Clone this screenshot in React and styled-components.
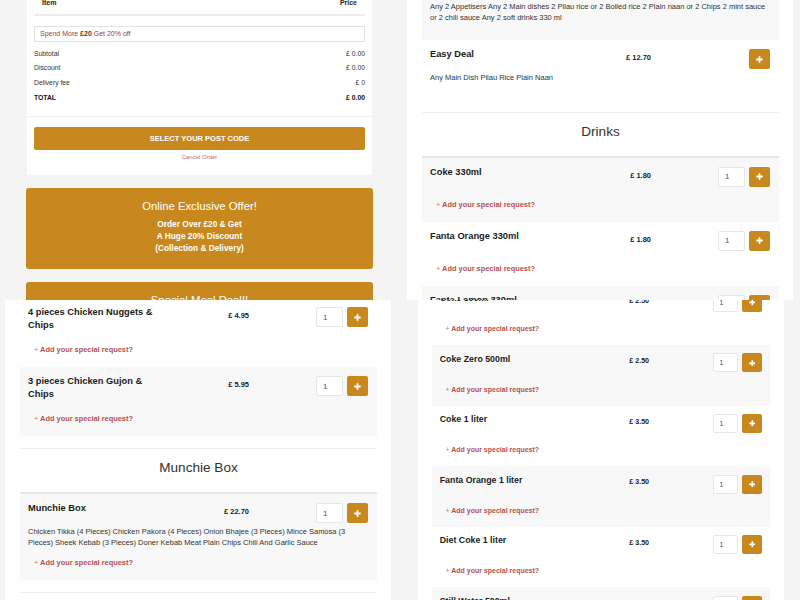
import styled, { createGlobalStyle } from "styled-components";

const GOLD = "#c9881d";

const GlobalStyle = createGlobalStyle`
  html, body {
    margin: 0;
    padding: 0;
    background: #f4f4f4;
  }
  body {
    font-family: "Liberation Sans", Arial, sans-serif;
    color: #333;
  }
  * {
    box-sizing: border-box;
  }
`;

const Screen = styled.div`
  width: 800px;
  height: 600px;
  display: grid;
  grid-template-columns: 400px 400px;
  grid-template-rows: 300px 300px;
  overflow: hidden;
`;

const Pane = styled.div`
  overflow: hidden;
  background: #f4f4f4;
`;

const Zoom = styled.div`
  zoom: ${(p) => p.$zoom || 1};
`;

/* ---------- cart column ---------- */

const CartCard = styled.div`
  width: 345px;
  margin: -12px 0 0 27px;
  padding-bottom: 12.6px;
  background: #fff;
`;

const CartHead = styled.div`
  margin: 0 7px;
  padding: 10px 8px 7px;
  display: flex;
  justify-content: space-between;
  border-bottom: 2px solid #ececec;
  font-size: 7px;
  font-weight: 700;
  line-height: 9px;
  color: #222;
`;

const Promo = styled.div`
  height: 16px;
  margin: 9.7px 7px 0;
  padding: 0 5px;
  border: 1px solid #e2e2e2;
  font-size: 7px;
  line-height: 14px;
  color: #8b4848;

  b {
    color: #6b2f2f;
  }
`;

const Totals = styled.div`
  padding: 5px 7px 11px;
`;

const TotalRow = styled.div`
  height: 14.67px;
  display: flex;
  justify-content: space-between;
  font-size: 6.8px;
  line-height: 14.67px;
  font-weight: ${(p) => (p.$strong ? 700 : 400)};
  color: ${(p) => (p.$strong ? "#111" : "#333")};
`;

const CartFoot = styled.div`
  padding: 10px 7px 0;
  border-top: 1px solid #f1f1f1;
  text-align: center;
`;

const PostcodeButton = styled.button`
  width: 100%;
  height: 23px;
  border: none;
  border-radius: 2px;
  background: ${GOLD};
  color: #fff;
  font-family: "Liberation Sans", Arial, sans-serif;
  font-size: 7.5px;
  font-weight: 700;
`;

const Cancel = styled.div`
  margin-top: 2px;
  font-size: 6px;
  line-height: 10px;
  color: #c46a6a;
`;

const OfferBox = styled.div`
  width: 347px;
  margin: 13px 0 0 26px;
  padding: 11px 10px 15px;
  border-radius: 3px;
  background: ${GOLD};
  color: #fff;
  text-align: center;
`;

const OfferTitle = styled.div`
  font-size: 11.3px;
  line-height: 14px;
`;

const OfferText = styled.div`
  margin-top: 5px;
  font-size: 8.3px;
  font-weight: 700;
  line-height: 12px;
`;

/* ---------- menu column ---------- */

const MenuCard = styled.div`
  width: 386px;
  margin: ${(p) => p.$top}px 0 0 ${(p) => p.$left}px;
  padding: 0 14px 0 15px;
  background: #fff;
`;

const Section = styled.section`
  padding-bottom: 12px;
  border-top: ${(p) => (p.$first ? "none" : "1px solid #efefef")};
`;

const SectionTitle = styled.h2`
  margin: 0;
  padding: 10px 0 15px;
  border-bottom: 2px solid #e6e6e6;
  text-align: center;
  font-size: 13.6px;
  font-weight: 400;
  line-height: 18px;
  color: #333;
`;

const Row = styled.div`
  padding: 8px 9px ${(p) => (p.$deal ? 17 : 12)}px 8px;
  background: ${(p) => (p.$alt ? "#f8f8f8" : "#fff")};
`;

const Head = styled.div`
  display: flex;
  align-items: flex-start;
`;

const Name = styled.div`
  width: 140px;
  font-size: 9.3px;
  font-weight: 700;
  line-height: 13px;
  color: #1b1b1b;
`;

const Price = styled.div`
  width: 81px;
  margin-top: 5px;
  text-align: right;
  font-size: 7.5px;
  font-weight: 700;
  line-height: 10px;
  color: #222;
`;

const Controls = styled.div`
  margin-left: auto;
  margin-top: 1px;
  display: flex;
  gap: 4px;
`;

const Qty = styled.input`
  width: 27px;
  height: 20px;
  padding: 0 0 0 6px;
  border: 1px solid #e6e6e6;
  border-radius: 2px;
  background: #fff;
  font-family: "Liberation Sans", Arial, sans-serif;
  font-size: 8px;
  color: #555;
  outline: none;
`;

const AddBtn = styled.button`
  width: 21px;
  height: 20px;
  padding: 0;
  border: none;
  border-radius: 2px;
  background: ${GOLD};
  display: flex;
  align-items: center;
  justify-content: center;
`;

const Desc = styled.p`
  margin: 2.5px 0 0;
  font-size: 7.5px;
  line-height: 11px;
  color: #333;
`;

const Request = styled.div`
  margin-top: 13px;
  padding-left: 6px;
  font-size: 7.4px;
  font-weight: 700;
  line-height: 10px;
  color: #b5524f;

  ${Desc} + & {
    margin-top: 10.5px;
  }

  span {
    font-weight: 400;
    color: #c98080;
  }
`;

const PlusIcon = () => (
  <svg width="7" height="7" viewBox="0 0 7 7">
    <path d="M3.5 0.3v6.4M0.3 3.5h6.4" stroke="#fff" strokeWidth="1.8" />
  </svg>
);

const MenuItem = ({ name, price, desc, alt, deal }) => (
  <Row $alt={alt} $deal={deal}>
    <Head>
      <Name>{name}</Name>
      <Price>{price}</Price>
      <Controls>
        {!deal && <Qty defaultValue="1" />}
        <AddBtn>
          <PlusIcon />
        </AddBtn>
      </Controls>
    </Head>
    {desc && <Desc>{desc}</Desc>}
    {!deal && (
      <Request>
        <span>+</span> Add your special request?
      </Request>
    )}
  </Row>
);

const Cart = () => (
  <>
    <CartCard>
      <CartHead>
        <span>Item</span>
        <span>Price</span>
      </CartHead>
      <Promo>
        Spend More <b>£20</b> Get 20% off
      </Promo>
      <Totals>
        <TotalRow>
          <span>Subtotal</span>
          <span>£ 0.00</span>
        </TotalRow>
        <TotalRow>
          <span>Discount</span>
          <span>£ 0.00</span>
        </TotalRow>
        <TotalRow>
          <span>Delivery fee</span>
          <span>£ 0</span>
        </TotalRow>
        <TotalRow $strong>
          <span>TOTAL</span>
          <span>£ 0.00</span>
        </TotalRow>
      </Totals>
      <CartFoot>
        <PostcodeButton>SELECT YOUR POST CODE</PostcodeButton>
        <Cancel>Cancel Order</Cancel>
      </CartFoot>
    </CartCard>
    <OfferBox>
      <OfferTitle>Online Exclusive Offer!</OfferTitle>
      <OfferText>
        Order Over £20 &amp; Get
        <br />
        A Huge 20% Discount
        <br />
        (Collection &amp; Delivery)
      </OfferText>
    </OfferBox>
    <OfferBox>
      <OfferTitle>Special Meal Deal!!</OfferTitle>
    </OfferBox>
  </>
);

const App = () => (
  <>
    <GlobalStyle />
    <Screen>
      <Pane>
        <Cart />
      </Pane>

      <Pane>
        <MenuCard $top={-30.5} $left={7}>
          <Section $first>
            <MenuItem
              alt
              deal
              name="Family Meal Deal"
              price="£ 29.95"
              desc="Any 2 Appetisers Any 2 Main dishes 2 Pilau rice or 2 Boiled rice 2 Plain naan or 2 Chips 2 mint sauce or 2 chili sauce Any 2 soft drinks 330 ml"
            />
            <MenuItem
              deal
              name="Easy Deal"
              price="£ 12.70"
              desc="Any Main Dish Pilau Rice Plain Naan"
            />
          </Section>
          <Section>
            <SectionTitle>Drinks</SectionTitle>
            <MenuItem alt name="Coke 330ml" price="£ 1.80" />
            <MenuItem name="Fanta Orange 330ml" price="£ 1.80" />
            <MenuItem alt name="Fanta Lemon 330ml" price="£ 1.80" />
          </Section>
        </MenuCard>
      </Pane>

      <Pane>
        <MenuCard $top={-2} $left={5}>
          <Section $first>
            <MenuItem name="4 pieces Chicken Nuggets & Chips" price="£ 4.95" />
            <MenuItem alt name="3 pieces Chicken Gujon & Chips" price="£ 5.95" />
          </Section>
          <Section>
            <SectionTitle>Munchie Box</SectionTitle>
            <MenuItem
              alt
              name="Munchie Box"
              price="£ 22.70"
              desc="Chicken Tikka (4 Pieces) Chicken Pakora (4 Pieces) Onion Bhajee (3 Pieces) Mince Samosa (3 Pieces) Sheek Kebab (3 Pieces) Doner Kebab Meat Plain Chips Chili And Garlic Sauce"
            />
          </Section>
          <Section>
            <SectionTitle>Desserts</SectionTitle>
          </Section>
        </MenuCard>
      </Pane>

      <Pane>
        <Zoom $zoom={0.947}>
          <MenuCard $top={-16.5} $left={19}>
            <Section $first>
              <MenuItem name="Coke 500ml" price="£ 2.50" />
              <MenuItem alt name="Coke Zero 500ml" price="£ 2.50" />
              <MenuItem name="Coke 1 liter" price="£ 3.50" />
              <MenuItem alt name="Fanta Orange 1 liter" price="£ 3.50" />
              <MenuItem name="Diet Coke 1 liter" price="£ 3.50" />
              <MenuItem alt name="Still Water 500ml" price="£ 1.20" />
            </Section>
          </MenuCard>
        </Zoom>
      </Pane>
    </Screen>
  </>
);

export default App;
